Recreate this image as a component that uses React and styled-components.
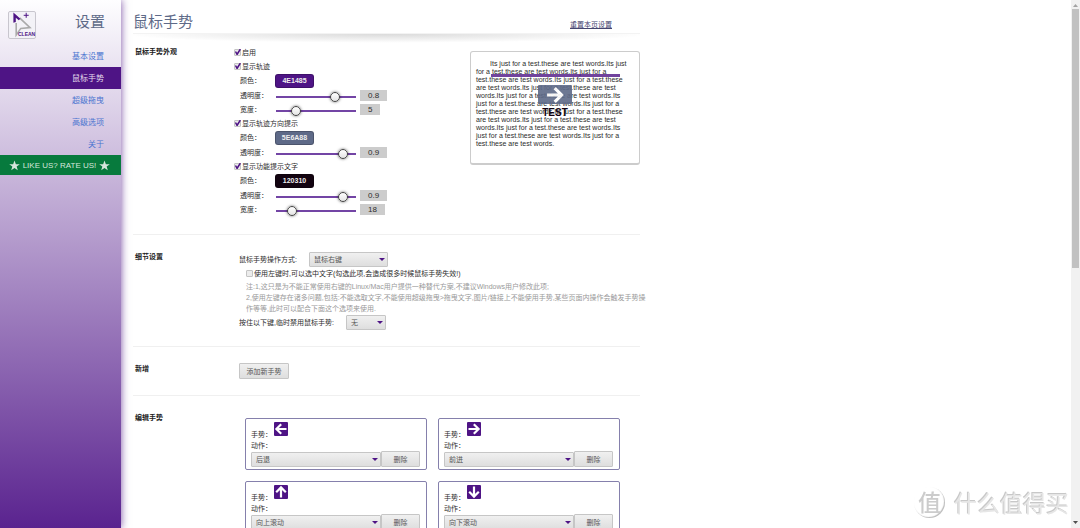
import React from 'react';
import styled, { createGlobalStyle, css } from 'styled-components';

const purple = '#4e1485';
const slate = '#5e6a88';
const sans = '"Liberation Sans", "Noto Sans CJK SC", sans-serif';

const GlobalStyle = createGlobalStyle`
  *, *::before, *::after { box-sizing: border-box; }
  body {
    margin: 0;
    background: #fff;
    color: #2c2c2c;
    font-family: ${sans};
    font-size: 7px;
    line-height: 11px;
  }
  button, input, select { font-family: inherit; font-size: inherit; margin: 0; }
  h1, h2, p, ul { margin: 0; padding: 0; }
`;

const Page = styled.div`
  display: flex;
  height: 100vh;
  overflow: hidden;
`;

/* ---------- sidebar ---------- */

const Sidebar = styled.aside`
  flex: 0 0 121px;
  background: linear-gradient(#fefeff, #5a238f);
  box-shadow: 0 0 8px rgba(78, 20, 133, 0.75);
`;

const Brand = styled.div`
  display: flex;
  align-items: flex-start;
  justify-content: space-between;
  height: 45px;
  padding: 11px 16px 0 8px;
`;

const BrandTitle = styled.h1`
  font-size: 15px;
  line-height: 22px;
  font-weight: 400;
  color: ${slate};
`;

const NavList = styled.ul`
  list-style: none;
`;

const NavLink = styled.a`
  display: block;
  height: 22px;
  padding: 2px 17px 0 0;
  font-size: 8px;
  line-height: 20px;
  text-align: right;
  text-decoration: none;
  color: ${(p) => (p.$active ? '#e4dcec' : '#4b74d0')};
  background: ${(p) => (p.$active ? purple : 'transparent')};
`;

const RateLink = styled.a`
  display: flex;
  align-items: center;
  justify-content: center;
  gap: 3px;
  height: 20px;
  padding-right: 2px;
  font-size: 8px;
  text-decoration: none;
  color: #d5e6dc;
  background: #077a3d;
`;

/* ---------- main column ---------- */

const Main = styled.main`
  flex: 1;
  min-width: 0;
  overflow: hidden;
  padding: 0 12px;
`;

const Column = styled.div`
  max-width: 507px;
`;

const Header = styled.header`
  display: flex;
  align-items: center;
  justify-content: space-between;
  height: 33px;
  padding: 11px 28px 0 0;
`;

const PageTitle = styled.h1`
  font-size: 15px;
  line-height: 22px;
  font-weight: 400;
  color: ${slate};
`;

const ResetLink = styled.a`
  color: #45456f;
  padding-top: 5px;
`;

const HeaderShade = styled.div`
  height: 12px;
  border-top: 1px solid #f3f3f3;
  background: radial-gradient(ellipse 52% 80% at 50% 0, #dadada, rgba(255, 255, 255, 0) 100%);
`;

const Section = styled.section`
  display: grid;
  grid-template-columns: 101px 1fr;
  padding: ${(p) => (p.$first ? '0 0 18px' : '16px 0')};
  border-bottom: 1px solid #f0f0f0;
`;

const SectionTitle = styled.h2`
  padding: ${(p) => (p.$first ? '1px' : '0')} 0 0 2px;
  font-size: 7px;
  line-height: 11px;
  font-weight: 700;
  color: #222;
`;

const Split = styled.div`
  display: flex;
  justify-content: space-between;
  align-items: flex-start;
`;

const Row = styled.div`
  display: flex;
  align-items: center;
  height: ${(p) => p.$h || 14}px;
  padding-left: ${(p) => (p.$indent ? 6 : 0)}px;
`;

const RowLabel = styled.label`
  width: 35px;
`;

const CheckLabel = styled.label`
  display: flex;
  align-items: center;
  gap: 1px;
  height: ${(p) => p.$h || 14}px;
`;

const CheckBox = styled.input.attrs({ type: 'checkbox' })`
  appearance: none;
  position: relative;
  width: 7px;
  height: 7px;
  border: 1px solid #c4c4c4;
  border-radius: 1px;
  background: #ececec;
  &:checked::after {
    content: '';
    position: absolute;
    inset: -1px;
    background: ${purple};
    clip-path: polygon(12% 45%, 30% 40%, 44% 60%, 82% 4%, 100% 16%, 52% 92%, 36% 92%);
  }
`;

const ColorField = styled.input.attrs({ type: 'text', readOnly: true })`
  width: 39px;
  height: 14px;
  padding: 0;
  border: 1px solid rgba(0, 0, 0, 0.2);
  border-radius: 3px;
  text-align: center;
  font-weight: 700;
  color: #eee;
  background: ${(p) => p.$color};
`;

const Range = styled.input.attrs({ type: 'range' })`
  appearance: none;
  width: 80px;
  height: 10px;
  margin: 3px 4px 0 1px;
  background: linear-gradient(#7345a5, #7345a5) center / 100% 2px no-repeat;
  &::-webkit-slider-thumb {
    appearance: none;
    width: 10px;
    height: 10px;
    border: 1px solid #444;
    border-radius: 50%;
    background: linear-gradient(#fff, #e4e4e4);
    box-shadow: 0 0 3px rgba(0, 0, 0, 0.6);
  }
`;

const Value = styled.output`
  padding: 0 8px;
  font-size: 8px;
  line-height: 11px;
  background: #ccc;
`;

/* ---------- preview ---------- */

const Preview = styled.div`
  position: relative;
  width: 170px;
  height: 114px;
  margin-top: 6px;
  padding: 8px 5px;
  border: 1px solid #ccc;
  border-bottom-width: 2px;
  border-radius: 3px;
  line-height: 8px;
`;

const PreviewText = styled.p`
  text-indent: 14px;
  white-space: pre-line;
`;

const Trail = styled.span`
  position: absolute;
  left: 20px;
  top: 22px;
  width: 129px;
  height: 3px;
  background: ${purple};
  opacity: 0.8;
`;

const Hint = styled.div`
  position: absolute;
  left: 67px;
  top: 33px;
  display: flex;
  flex-direction: column;
  align-items: center;
  gap: 3px;
  font-size: 10px;
  line-height: 11px;
  font-weight: 700;
  color: #120310;
`;

const HintArrow = styled.span`
  display: flex;
  align-items: center;
  justify-content: center;
  width: 34px;
  height: 19px;
  border-radius: 1px;
  background: ${slate};
  opacity: 0.9;
`;

/* ---------- buttons and menus ---------- */

const grayFace = css`
  border: 1px solid #c6c6c6;
  border-radius: 1px;
  color: #555;
  background: linear-gradient(#f0f0f0, #dedede);
`;

const SelectWrap = styled.span`
  position: relative;
  display: block;
  width: ${(p) => (p.$w ? `${p.$w}px` : 'auto')};
  flex: ${(p) => (p.$w ? 'none' : 1)};
  &::after {
    content: '';
    position: absolute;
    right: 3px;
    top: 50%;
    margin-top: -1px;
    border: 3px solid transparent;
    border-top-color: ${purple};
    border-bottom: 0;
    pointer-events: none;
  }
`;

const Select = styled.select`
  ${grayFace}
  appearance: none;
  display: block;
  width: 100%;
  height: 15px;
  padding: 0 12px 0 4px;
`;

const Button = styled.button`
  ${grayFace}
  width: ${(p) => p.$w}px;
  height: 16px;
  padding: 0;
`;

const Fields = styled.div`
  padding-left: 5px;
`;

const FieldRow = styled.div`
  display: flex;
  align-items: center;
  gap: 12px;
  height: 16px;
`;

const Nested = styled.div`
  padding-left: 7px;
`;

const Notes = styled.div`
  padding-top: 1px;
  color: #999;
  white-space: nowrap;
`;

const Cards = styled.div`
  display: grid;
  grid-template-columns: 1fr 1fr;
  gap: 11px;
  padding: 6px 20px 0 11px;
`;

const Card = styled.article`
  height: 52px;
  padding: 3px 6px 3px 5px;
  border: 1px solid #8580ac;
  border-radius: 2px;
`;

const CardGesture = styled.div`
  display: flex;
  align-items: flex-start;
  gap: 2px;
  height: 18px;
`;

const CardCaption = styled.span`
  padding-top: 7px;
`;

const CardAction = styled.label`
  display: block;
`;

const CardControls = styled.div`
  display: flex;
  align-items: center;
`;

/* ---------- scroll bar and watermark ---------- */

const ScrollTrack = styled.div`
  flex: 0 0 9px;
  display: flex;
  flex-direction: column;
  align-items: center;
  padding: 4px 0;
  background: #f1f1f1;
`;

const ScrollThumb = styled.span`
  width: 7px;
  height: 49vh;
  margin: 2px 0 auto;
  background: #c1c1c1;
`;

const Watermark = styled.div`
  position: fixed;
  right: 11px;
  bottom: 10px;
  display: flex;
  align-items: center;
  gap: 9px;
  font-family: "Noto Sans CJK SC", sans-serif;
  font-size: 23px;
  line-height: 32px;
  color: #e6e6e6;
  text-shadow: -1px -1px 0 #c8c8c8;
`;

const Seal = styled.span`
  width: 31px;
  height: 31px;
  border-radius: 50%;
  line-height: 29px;
  text-align: center;
  font-weight: 500;
  color: #ccc;
  text-shadow: none;
  box-shadow: inset -1px -1px 1px #bbb;
`;

/* ---------- drawings ---------- */

const Logo = () => (
  <svg width="28" height="28" viewBox="0 0 28 28" aria-hidden="true">
    <rect x=".5" y=".5" width="27" height="27" rx="1.5" fill="#f3f2f7" stroke="#c8c6ce" />
    <path d="M8.200 12v12l4.600-6.600L22 16.600 11.600 6.800" fill="none" stroke="#aaa" strokeWidth="1.600" />
    <path d="M5.400 1.400l7 6.400-1.600 1.400-3-2.400v4.200l-2.400.8z" fill={purple} />
    <path d="M18.200 1.800v5M15.700 4.300h5" stroke={purple} strokeWidth="1" />
    <text x="10" y="25" fontSize="5" fontWeight="700" fill={purple}>CLEAN</text>
  </svg>
);

const Star = () => (
  <svg width="11" height="11" viewBox="0 0 24 24" fill="#d5e6dc" aria-hidden="true">
    <path d="M12 1l3 8h8.500l-6.800 5.200 2.500 8.300L12 17.500l-7.200 5 2.500-8.300L.5 9H9z" />
  </svg>
);

const turns = { right: 0, down: 90, left: 180, up: 270 };

const Arrow = ({ dir, size = 14, fill = purple }) => (
  <svg width={size} height={size} viewBox="0 0 14 14" role="img" aria-label={dir}>
    <rect width="14" height="14" rx="1" fill={fill} />
    <path
      d="M1.500 7h10M6.800 2.200L11.600 7l-4.800 4.800"
      fill="none"
      stroke="#fff"
      strokeWidth="2.200"
      transform={`rotate(${turns[dir]} 7 7)`}
    />
  </svg>
);

const Triangle = ({ up, color }) => (
  <svg width="5" height="3" viewBox="0 0 5 3" aria-hidden="true">
    <path d={up ? 'M0 3L2.500 0 5 3z' : 'M0 0h5L2.500 3z'} fill={color} />
  </svg>
);

/* ---------- data ---------- */

const nav = ['基本设置', '鼠标手势', '超级拖曳', '高级选项', '关于'];

const groups = [
  {
    id: 'trail',
    title: '显示轨迹',
    color: '4E1485',
    sliders: [
      { label: '透明度：', min: 0.1, max: 1, step: 0.1, value: 0.8 },
      { label: '宽度：', min: 1, max: 20, step: 1, value: 5 },
    ],
  },
  {
    id: 'direction',
    title: '显示轨迹方向提示',
    color: '5E6A88',
    sliders: [{ label: '透明度：', min: 0.1, max: 1, step: 0.1, value: 0.9 }],
  },
  {
    id: 'text',
    title: '显示功能提示文字',
    color: '120310',
    sliders: [
      { label: '透明度：', min: 0.1, max: 1, step: 0.1, value: 0.9 },
      { label: '宽度：', min: 10, max: 60, step: 1, value: 18 },
    ],
  },
];

const gestures = [
  { dir: 'left', action: '后退' },
  { dir: 'right', action: '前进' },
  { dir: 'up', action: '向上滚动' },
  { dir: 'down', action: '向下滚动' },
];

const sample = `Its just for a test.these are test words.Its just
for a test.these are test words.Its just for a
test.these are test words.Its just for a test.these
are test words.Its just for a test.these are test
words.Its just for a test.these are test words.Its
just for a test.these are test words.Its just for a
test.these are test words.Its just for a test.these
are test words.Its just for a test.these are test
words.Its just for a test.these are test words.Its
just for a test.these are test words.Its just for a
test.these are test words.`;

const StyleGroup = ({ id, title, color, sliders }) => (
  <div>
    <CheckLabel>
      <CheckBox defaultChecked />
      {title}
    </CheckLabel>
    <Row $indent $h={15}>
      <RowLabel htmlFor={`${id}-color`}>颜色：</RowLabel>
      <ColorField id={`${id}-color`} $color={`#${color}`} value={color} />
    </Row>
    {sliders.map((s, i) => (
      <Row $indent key={s.label}>
        <RowLabel htmlFor={`${id}-${i}`}>{s.label}</RowLabel>
        <Range id={`${id}-${i}`} min={s.min} max={s.max} step={s.step} defaultValue={s.value} />
        <Value htmlFor={`${id}-${i}`}>{s.value}</Value>
      </Row>
    ))}
  </div>
);

const GestureCard = ({ dir, action }) => (
  <Card>
    <CardGesture>
      <CardCaption>手势：</CardCaption>
      <Arrow dir={dir} />
    </CardGesture>
    <CardAction htmlFor={`action-${dir}`}>动作：</CardAction>
    <CardControls>
      <SelectWrap>
        <Select id={`action-${dir}`}>
          <option>{action}</option>
        </Select>
      </SelectWrap>
      <Button type="button" $w={39}>删除</Button>
    </CardControls>
  </Card>
);

export default function App() {
  return (
    <Page>
      <GlobalStyle />
      <Sidebar>
        <Brand>
          <Logo />
          <BrandTitle>设置</BrandTitle>
        </Brand>
        <nav>
          <NavList>
            {nav.map((name) => (
              <li key={name}>
                <NavLink href="#" $active={name === '鼠标手势'}>{name}</NavLink>
              </li>
            ))}
          </NavList>
        </nav>
        <RateLink href="#">
          <Star />
          LIKE US? RATE US!
          <Star />
        </RateLink>
      </Sidebar>

      <Main>
        <Column>
          <Header>
            <PageTitle>鼠标手势</PageTitle>
            <ResetLink href="#">重置本页设置</ResetLink>
          </Header>
          <HeaderShade />

          <Section $first>
            <SectionTitle $first>鼠标手势外观</SectionTitle>
            <Split>
              <div>
                <CheckLabel>
                  <CheckBox defaultChecked />
                  启用
                </CheckLabel>
                {groups.map((g) => (
                  <StyleGroup key={g.id} {...g} />
                ))}
              </div>
              <Preview>
                <PreviewText>{sample}</PreviewText>
                <Trail />
                <Hint>
                  <HintArrow>
                    <Arrow dir="right" size={20} fill="none" />
                  </HintArrow>
                  TEST
                </Hint>
              </Preview>
            </Split>
          </Section>

          <Section>
            <SectionTitle>细节设置</SectionTitle>
            <Fields>
              <FieldRow>
                <label htmlFor="button-mode">鼠标手势操作方式:</label>
                <SelectWrap $w={79}>
                  <Select id="button-mode">
                    <option>鼠标右键</option>
                  </Select>
                </SelectWrap>
              </FieldRow>
              <Nested>
                <CheckLabel $h={13}>
                  <CheckBox />
                  使用左键时,可以选中文字(勾选此项,会造成很多时候鼠标手势失效!)
                </CheckLabel>
                <Notes>
                  <p>注:1,这只是为不能正常使用右键的Linux/Mac用户提供一种替代方案,不建议Windows用户修改此项;</p>
                  <p>
                    2,使用左键存在诸多问题,包括:不能选取文字,不能使用超级拖曳&gt;拖曳文字,图片/链接上不能使用手势,某些页面内操作会触发手势操
                    <br />
                    作等等,此时可以配合下面这个选项来使用.
                  </p>
                </Notes>
              </Nested>
              <FieldRow>
                <label htmlFor="disable-key">按住以下键,临时禁用鼠标手势:</label>
                <SelectWrap $w={40}>
                  <Select id="disable-key">
                    <option>无</option>
                  </Select>
                </SelectWrap>
              </FieldRow>
            </Fields>
          </Section>

          <Section>
            <SectionTitle>新增</SectionTitle>
            <Fields>
              <Button type="button" $w={50}>添加新手势</Button>
            </Fields>
          </Section>

          <Section>
            <SectionTitle>编辑手势</SectionTitle>
            <Cards>
              {gestures.map((g) => (
                <GestureCard key={g.dir} {...g} />
              ))}
            </Cards>
          </Section>
        </Column>
      </Main>

      <ScrollTrack>
        <Triangle up color="#a3a3a3" />
        <ScrollThumb />
        <Triangle color="#505050" />
      </ScrollTrack>

      <Watermark>
        <Seal>值</Seal>
        什么值得买
      </Watermark>
    </Page>
  );
}
